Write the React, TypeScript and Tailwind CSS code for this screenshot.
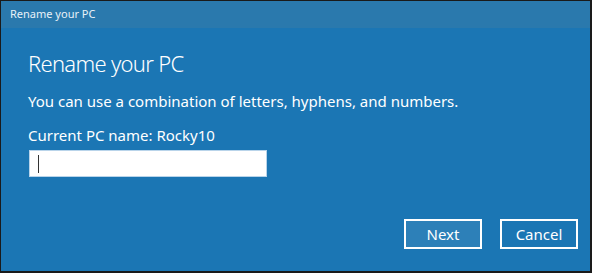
export default function App() {
  return (
    <div className="w-[592px] h-[273px] bg-[#1a1a1a] pt-px pl-px pr-[2px] pb-[2px]" style={{ fontFamily: '"Noto Sans", "Open Sans", sans-serif' }}>
      <div className="flex flex-col h-full bg-[#1b76b4] text-white">
        <div className="h-[27px] bg-[#2a79ad] flex items-center pl-[9px] text-[11px] text-[#e8f1f8]">Rename your PC</div>
        <div className="flex-1 flex flex-col pl-[27px] pr-[12px]">
          <h1 className="mt-[19px] text-[22px] leading-[32px] font-light tracking-[-0.7px]">Rename your PC</h1>
          <p className="mt-[12px] text-[15px] leading-[20px]">You can use a combination of letters, hyphens, and numbers.</p>
          <p className="mt-[14px] text-[15px] leading-[20px]">Current PC name: Rocky10</p>
          <div className="mt-[5px] ml-px w-[238px] h-[27px] bg-white border border-[#b9d4ea] flex items-center pl-[8px]">
            <div className="w-px h-[18px] bg-[#333]" />
          </div>
          <div className="mt-auto mb-[22px] flex justify-end gap-[18px]">
            <button className="w-[78px] h-[30px] border-2 border-white bg-[#2d80b8] text-[15px]">Next</button>
            <button className="w-[78px] h-[30px] border-2 border-white text-[15px]">Cancel</button>
          </div>
        </div>
      </div>
    </div>
  );
}
